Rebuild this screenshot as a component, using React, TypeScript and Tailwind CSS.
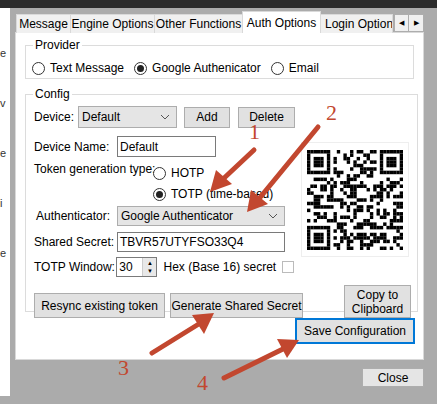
import React from 'react';

function Radio({ checked, label }: { checked?: boolean; label: string }) {
  return (
    <label className="flex items-center gap-[5px]">
      <span className="w-[13px] h-[13px] rounded-full border border-[#333] bg-white flex items-center justify-center">
        {checked && <span className="w-[7px] h-[7px] rounded-full bg-[#222]" />}
      </span>
      <span>{label}</span>
    </label>
  );
}

function Btn({ children, className = '' }: { children: React.ReactNode; className?: string }) {
  return (
    <div className={`bg-[#e1e1e1] border border-[#adadad] flex items-center justify-center text-center leading-[14px] ${className}`}>
      {children}
    </div>
  );
}

function Chevron() {
  return (
    <svg width="10" height="6" viewBox="0 0 10 6" className="ml-auto mr-[6px]">
      <path d="M1 1 L5 5 L9 1" stroke="#555" fill="none" strokeWidth="1" />
    </svg>
  );
}

function Qr() {
  // pseudo-random QR pattern
  const n = 29;
  const cells: React.ReactNode[] = [];
  let seed = 7;
  const rnd = () => {
    seed = (seed * 9301 + 49297) % 233280;
    return seed / 233280;
  };
  const finder = (x: number, y: number) => {
    for (const [fx, fy] of [[0, 0], [n - 7, 0], [0, n - 7]]) {
      if (x >= fx && x < fx + 7 && y >= fy && y < fy + 7) {
        const dx = x - fx, dy = y - fy;
        if (dx === 0 || dy === 0 || dx === 6 || dy === 6) return 1;
        if (dx >= 2 && dx <= 4 && dy >= 2 && dy <= 4) return 1;
        return 0;
      }
      if (x >= fx - 1 && x <= fx + 7 && y >= fy - 1 && y <= fy + 7) return 0;
    }
    return -1;
  };
  for (let y = 0; y < n; y++)
    for (let x = 0; x < n; x++) {
      const f = finder(x, y);
      const on = f === -1 ? rnd() > 0.5 : f === 1;
      if (on) cells.push(<rect key={`${x}-${y}`} x={x} y={y} width="1.02" height="1.02" fill="#000" />);
    }
  return (
    <svg width="96" height="100" viewBox={`0 0 ${n} ${n}`} preserveAspectRatio="none">
      {cells}
    </svg>
  );
}

export default function App() {
  const tabs = ['Message', 'Engine Options', 'Other Functions'];
  return (
    <div
      className="relative w-[437px] h-[404px] overflow-hidden bg-[#ababab] text-[12px] text-black whitespace-nowrap"
      style={{ fontFamily: '"Liberation Sans", Arial, sans-serif' }}
    >
      <div className="h-[8px] bg-[#2b2b2b]" />
      <div className="flex">
        <div className="w-[10px] h-[388px] bg-white text-[11px] text-[#333] overflow-hidden leading-[50px] pt-[20px]">
          <div>e</div><div>v</div><div>e</div><div>i</div><div>e</div>
        </div>
        <div className="flex-1 pl-[5px]">
          {/* tabs */}
          <div className="flex items-end h-[25px] pl-[1px] pt-[4px]">
            <div className="h-[19px] w-[55px] bg-[#f0f0f0] border border-[#d9d9d9] border-b-0 flex items-center justify-center -mr-[1px]">{tabs[0]}</div>
            <div className="h-[19px] w-[85px] bg-[#f0f0f0] border border-[#d9d9d9] border-b-0 flex items-center justify-center -mr-[1px]">{tabs[1]}</div>
            <div className="h-[19px] w-[89px] bg-[#f0f0f0] border border-[#d9d9d9] border-b-0 flex items-center justify-center -mr-[1px]">{tabs[2]}</div>
            <div className="h-[22px] w-[79px] bg-white border border-[#d9d9d9] border-b-0 flex items-center justify-center -mr-[1px] relative z-10">
              Auth Options
            </div>
            <div className="h-[19px] pl-[4px] bg-[#f0f0f0] border border-[#d9d9d9] border-b-0 flex items-center w-[73px] overflow-hidden">
              Login Options
            </div>
            <div className="h-[18px] flex mb-[1px] ml-[1px]">
              <div className="w-[15px] bg-[#f0f0f0] border border-[#adadad] flex items-center justify-center text-[7px]">◀</div>
              <div className="w-[15px] bg-[#f0f0f0] border border-[#adadad] border-l-0 flex items-center justify-center text-[7px]">▶</div>
            </div>
          </div>
          {/* page */}
          <div className="w-[409px] h-[328px] bg-white border border-[#d9d9d9] -mt-[1px] px-[9px] pt-[3px]">
            <fieldset className="border border-[#dcdcdc] h-[43px] px-[6px]">
              <legend className="px-[2px] ml-[1px]">Provider</legend>
              <div className="flex gap-[10px] mt-[5px]">
                <Radio label="Text Message" />
                <Radio checked label="Google Authenicator" />
                <Radio label="Email" />
              </div>
            </fieldset>
            <fieldset className="border border-[#dcdcdc] h-[227px] mt-[6px] px-[8px]">
              <legend className="px-[2px] -ml-[1px]">Config</legend>
              <div className="flex items-center h-[22px] mt-[3px]">
                <span className="w-[44px]">Device:</span>
                <div className="w-[99px] h-[22px] bg-[#e5e5e5] border border-[#adadad] flex items-center pl-[3px]">
                  Default<Chevron />
                </div>
                <Btn className="w-[46px] h-[21px] ml-[7px]">Add</Btn>
                <Btn className="w-[57px] h-[21px] ml-[8px]">Delete</Btn>
              </div>
              <div className="flex">
                <div className="w-[260px]">
                  <div className="flex items-center h-[21px] mt-[8px]">
                    <span className="w-[83px]">Device Name:</span>
                    <div className="w-[99px] h-[21px] border border-[#7a7a7a] pl-[2px] flex items-center">Default</div>
                  </div>
                  <div className="flex mt-[3px]">
                    <span className="w-[119px] leading-[18px]">Token generation type:</span>
                    <div className="flex flex-col gap-[3px] mt-[4px]">
                      <Radio label="HOTP" />
                      <Radio checked label="TOTP (time-based)" />
                    </div>
                  </div>
                  <div className="flex items-center h-[20px] mt-[3px]">
                    <span className="w-[83px] pl-[2px]">Authenticator:</span>
                    <div className="w-[168px] h-[20px] bg-[#e5e5e5] border border-[#adadad] flex items-center pl-[3px]">
                      Google Authenticator<Chevron />
                    </div>
                  </div>
                  <div className="flex items-center h-[20px] mt-[6px]">
                    <span className="w-[83px]">Shared Secret:</span>
                    <div className="w-[168px] h-[20px] border border-[#7a7a7a] pl-[2px] flex items-center">TBVR57UTYFSO33Q4</div>
                  </div>
                  <div className="flex items-center h-[20px] mt-[5px]">
                    <span className="w-[84px]">TOTP Window:</span>
                    <div className="w-[42px] h-[20px] border border-[#7a7a7a] flex items-center">
                      <span className="pl-[2px] flex-1">30</span>
                      <div className="w-[14px] h-full bg-[#e8e8e8] border-l border-[#ccc] flex flex-col items-center justify-center text-[6px] leading-[8px]">
                        <span>▲</span><span>▼</span>
                      </div>
                    </div>
                    <span className="ml-[6px]">Hex (Base 16) secret</span>
                    <span className="w-[12px] h-[12px] border border-[#bbb] ml-[6px]" />
                  </div>
                </div>
                <div className="ml-[7px] mt-[14px] w-[108px] h-[115px] bg-white border border-[#eee] flex items-center justify-center">
                  <Qr />
                </div>
              </div>
              <div className="flex items-end mt-[8px]">
                <Btn className="w-[131px] h-[25px]">Resync existing token</Btn>
                <Btn className="w-[133px] h-[25px] ml-[5px]">Generate Shared Secret</Btn>
                <Btn className="w-[67px] h-[33px] ml-auto -mr-[2px]">Copy to<br />Clipboard</Btn>
              </div>
            </fieldset>
            <div className="flex justify-end mt-[6px] -mr-[1px]">
              <div className="w-[120px] h-[26px] bg-[#e1e1e1] border-2 border-[#0078d7] flex items-center justify-center">
                Save Configuration
              </div>
            </div>
          </div>
          <div className="flex justify-end pr-[13px] mt-[8px]">
            <Btn className="w-[62px] h-[19px] bg-[#e5e5e5]">Close</Btn>
          </div>
        </div>
      </div>
      {/* annotations */}
      <svg className="absolute inset-0 pointer-events-none" width="437" height="404">
        <g stroke="#c2472f" strokeWidth="5" fill="#c2472f" strokeLinecap="round">
          <line x1="254" y1="150" x2="222" y2="180" />
          <polygon points="210,192 216,170 232,184" stroke="none" />
          <line x1="318" y1="127" x2="258" y2="200" />
          <polygon points="247,212 251,190 268,204" stroke="none" />
          <line x1="152" y1="353" x2="202" y2="322" />
          <polygon points="214,313 192,315 204,334" stroke="none" />
          <line x1="224" y1="378" x2="285" y2="348" />
          <polygon points="299,340 277,339 287,358" stroke="none" />
        </g>
        <g fill="#c2472f" fontFamily='"Liberation Serif", serif' fontSize="22">
          <text x="249" y="139">1</text>
          <text x="326" y="120">2</text>
          <text x="118" y="375">3</text>
          <text x="197" y="390">4</text>
        </g>
      </svg>
    </div>
  );
}
